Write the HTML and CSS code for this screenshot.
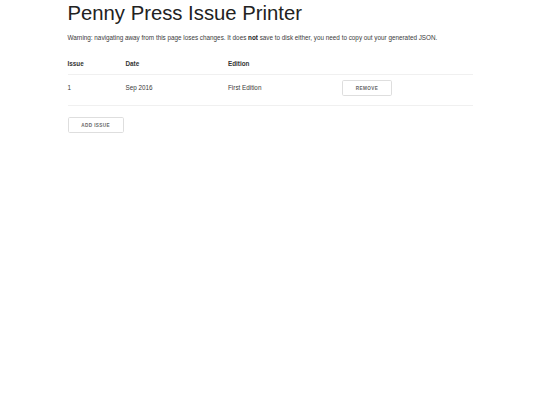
FILE: index.html
```html
<!DOCTYPE html>
<html lang="en">
<head>
<meta charset="utf-8">
<title>Penny Press Issue Printer</title>
<link rel="stylesheet" href="styles.css">
</head>
<body>
<div class="container">
  <h1 class="title">Penny Press Issue Printer</h1>
  <p class="warning">Warning: navigating away from this page loses changes. It does <strong>not</strong> save to disk either, you need to copy out your generated JSON.</p>
  <table class="issues">
    <colgroup>
      <col class="c-issue">
      <col class="c-date">
      <col class="c-edition">
      <col class="c-action">
    </colgroup>
    <thead>
      <tr><th>Issue</th><th>Date</th><th>Edition</th><th></th></tr>
    </thead>
    <tbody>
      <tr>
        <td>1</td>
        <td>Sep 2016</td>
        <td>First Edition</td>
        <td><button class="btn btn-row">Remove</button></td>
      </tr>
    </tbody>
  </table>
  <button class="btn">Add Issue</button>
</div>
</body>
</html>
```

FILE: styles.css
```css
html, body {
  margin: 0;
  padding: 0;
  background: #fff;
}
body {
  font-family: "Liberation Sans", Arial, Helvetica, sans-serif;
  font-size: 6.33px;
  line-height: 1.6;
  color: #3a3a3a;
}
.container {
  width: 405px;
  margin: 0 auto;
}
.title {
  margin: 0 0 8.4px;
  padding-top: 0.5px;
  font-size: 20.3px;
  line-height: 1.2;
  font-weight: 400;
  color: #222;
}
.warning {
  margin: 0 0 10.5px;
}
.warning strong {
  font-weight: 700;
  color: #222;
}
.issues {
  width: 100%;
  border-collapse: collapse;
  table-layout: fixed;
  margin: 0 0 10.5px;
}
.c-issue { width: 58px; }
.c-date { width: 102.5px; }
.c-edition { width: 114px; }
.issues th,
.issues td {
  text-align: left;
  padding: 5.06px 0;
  border-bottom: 1px solid #f0f0f0;
  vertical-align: baseline;
}
.issues th {
  font-weight: 700;
  color: #333;
}
.btn {
  display: inline-block;
  box-sizing: border-box;
  height: 16px;
  padding: 0 12.66px;
  margin: 0;
  font-family: "Liberation Sans", Arial, Helvetica, sans-serif;
  font-size: 4.64px;
  font-weight: 700;
  line-height: 15px;
  letter-spacing: 0.42px;
  text-transform: uppercase;
  color: #666;
  background: transparent;
  border: 1px solid #dedede;
  border-radius: 1.7px;
  white-space: nowrap;
  cursor: pointer;
}
.btn-row {
  margin-bottom: 4.2px;
  vertical-align: baseline;
}
```
